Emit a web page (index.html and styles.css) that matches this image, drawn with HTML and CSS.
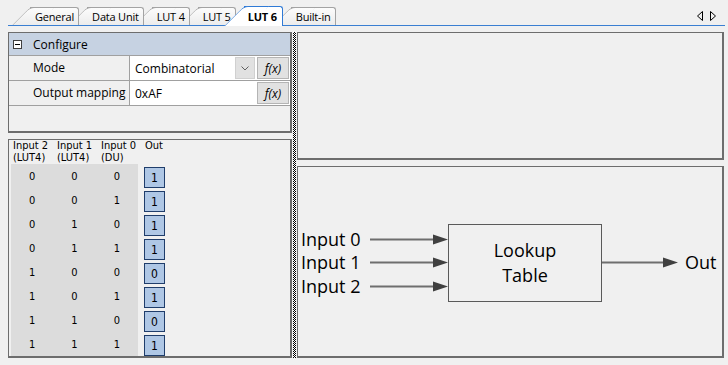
FILE: index.html
```html
<!DOCTYPE html>
<html lang="en">
<head>
    <meta charset="UTF-8">
    <title>LUT 6 - Configure</title>
    <link rel="stylesheet" href="styles.css">
</head>
<body>

<!-- Tab strip -->
<div class="tabbar">
    <div class="tabs">
        <div class="tab">General</div>
        <div class="tab">Data Unit</div>
        <div class="tab">LUT 4</div>
        <div class="tab">LUT 5</div>
        <div class="tab active">LUT 6</div>
        <div class="tab">Built-in</div>
    </div>
    <div class="tab-scroll">
        <svg width="6" height="10" viewBox="0 0 6 10"><polygon points="5.5,0.5 5.5,9.5 0.5,5" fill="none" stroke="#000"/></svg>
        <svg width="6" height="10" viewBox="0 0 6 10"><polygon points="0.5,0.5 0.5,9.5 5.5,5" fill="none" stroke="#000"/></svg>
    </div>
</div>

<div class="workspace">
    <div class="left-col">
        <!-- Property grid -->
        <div class="prop-grid">
            <div class="pg-header"><span class="collapse-box"></span>Configure</div>
            <div class="pg-row">
                <div class="pg-label">Mode</div>
                <div class="pg-value">Combinatorial</div>
                <button class="dd-btn"><svg width="8" height="5" viewBox="0 0 8 5"><polyline points="0.5,0.5 4,4 7.5,0.5" fill="none" stroke="#606060"/></svg></button>
                <button class="fx-btn">f(x)</button>
            </div>
            <div class="pg-row">
                <div class="pg-label">Output mapping</div>
                <div class="pg-value">0xAF</div>
                <button class="fx-btn">f(x)</button>
            </div>
        </div>

        <!-- Truth table -->
        <div class="truth-table">
            <div class="tt-head">
                <div>Input 2<br>(LUT4)</div>
                <div>Input 1<br>(LUT4)</div>
                <div>Input 0<br>(DU)</div>
                <div>Out</div>
            </div>
            <div class="tt-body">
                <div class="tt-values">
                    <span>0</span><span>0</span><span>0</span>
                    <span>0</span><span>0</span><span>1</span>
                    <span>0</span><span>1</span><span>0</span>
                    <span>0</span><span>1</span><span>1</span>
                    <span>1</span><span>0</span><span>0</span>
                    <span>1</span><span>0</span><span>1</span>
                    <span>1</span><span>1</span><span>0</span>
                    <span>1</span><span>1</span><span>1</span>
                </div>
                <div class="tt-out">
                    <button class="out-btn">1</button>
                    <button class="out-btn">1</button>
                    <button class="out-btn">1</button>
                    <button class="out-btn">1</button>
                    <button class="out-btn">0</button>
                    <button class="out-btn">1</button>
                    <button class="out-btn">0</button>
                    <button class="out-btn">1</button>
                </div>
            </div>
        </div>
    </div>

    <div class="splitter"></div>

    <div class="right-col">
        <div class="panel panel-top"></div>
        <div class="panel panel-diagram">
            <svg class="diagram" width="425" height="189" viewBox="0 0 425 189">
                <g class="wire">
                    <line x1="72" y1="72.5" x2="137" y2="72.5"/>
                    <line x1="72" y1="95.5" x2="137" y2="95.5"/>
                    <line x1="72" y1="119.5" x2="137" y2="119.5"/>
                    <line x1="304" y1="95.5" x2="367" y2="95.5"/>
                </g>
                <g class="head">
                    <polygon points="135,67.5 150,72.5 135,77.5"/>
                    <polygon points="135,90.5 150,95.5 135,100.5"/>
                    <polygon points="135,114.5 150,119.5 135,124.5"/>
                    <polygon points="365,90.5 380,95.5 365,100.5"/>
                </g>
                <rect class="lut-box" x="150.5" y="57.5" width="153" height="77"/>
                <text x="3" y="79">Input 0</text>
                <text x="3" y="102">Input 1</text>
                <text x="3" y="126">Input 2</text>
                <text x="227" y="90" text-anchor="middle">Lookup</text>
                <text x="227" y="115" text-anchor="middle">Table</text>
                <text x="387" y="102">Out</text>
            </svg>
        </div>
    </div>
</div>

</body>
</html>
```

FILE: styles.css
```css
/* Page */
body {
    margin: 0;
    width: 728px;
    height: 365px;
    overflow: hidden;
    background: #f0f0f0;
    font-family: 'Open Sans', 'Noto Sans', sans-serif;
    font-size: 12px;
    color: #000;
}

/* Tab strip */
.tabbar {
    display: flex;
    align-items: flex-end;
    height: 25px;
    margin: 0 3px 0 8px;
    border-bottom: 1px solid #3a7fd2;
}

.tabs {
    display: flex;
    align-items: flex-end;
    height: 100%;
    padding-left: 14px;
}

.tab {
    position: relative;
    height: 17px;
    line-height: 17px;
    margin-left: 8px;
    padding: 0 4px;
    border: 1px solid #a3a3a3;
    border-bottom: none;
    border-top-right-radius: 3px;
    background: linear-gradient(#fcfcfc, #ececec);
    font-size: 11px;
    letter-spacing: -0.2px;
}

/* slanted left edge */
.tab::before {
    content: '';
    position: absolute;
    left: -19px;
    top: -1px;
    bottom: 0;
    width: 24px;
    border-left: 1px solid #a3a3a3;
    border-top: 1px solid #a3a3a3;
    border-top-left-radius: 5px;
    background: inherit;
    transform: skewX(-45deg);
    transform-origin: bottom left;
    z-index: -1;
}

.tab:nth-child(1) { z-index: 6; }
.tab:nth-child(2) { z-index: 5; }
.tab:nth-child(3) { z-index: 4; }
.tab:nth-child(4) { z-index: 3; }
.tab:nth-child(6) { z-index: 1; }

.tab.active {
    z-index: 10;
    height: 19px;
    line-height: 19px;
    margin-bottom: -1px;
    border-color: #2f7ad6;
    background: #fff;
    font-weight: bold;
    padding: 0 5px 0 3px;
}

.tab.active::before {
    left: -21px;
    border-color: #2f7ad6;
    background: #fff;
}

.tab-scroll {
    display: flex;
    gap: 7px;
    margin-left: auto;
    align-self: flex-start;
    margin-top: 11px;
    padding-right: 9px;
}

.tab-scroll svg {
    display: block;
}

/* Main area */
.workspace {
    display: flex;
    height: 326px;
    margin: 6px 0 0 8px;
}

.left-col {
    display: flex;
    flex-direction: column;
    gap: 6px;
    width: 284px;
}

.splitter {
    width: 3px;
    margin: 0 1px;
    background: repeating-conic-gradient(#000 0 25%, #fff 0 50%) 0 0 / 2px 2px;
}

.right-col {
    display: flex;
    flex-direction: column;
    gap: 6px;
    width: 427px;
}

.panel, .prop-grid, .truth-table {
    box-sizing: border-box;
    border: 1px solid #6d6d6d;
    border-right-width: 2px;
    border-bottom-width: 2px;
}

.panel-top {
    height: 128px;
}

.panel-diagram {
    flex: 1;
}

/* Property grid */
.prop-grid {
    height: 102px;
}

.pg-header {
    display: flex;
    align-items: center;
    height: 22px;
    background: #c6d2e2;
    border-bottom: 1px solid #a0a0a0;
}

.collapse-box {
    position: relative;
    width: 7px;
    height: 7px;
    margin: 0 11px 0 4px;
    border: 1px solid #404040;
    background: #fff;
}

.collapse-box::after {
    content: '';
    position: absolute;
    left: 1px;
    top: 3px;
    width: 5px;
    height: 1px;
    background: #000;
}

.pg-row {
    display: flex;
    align-items: center;
    height: 24px;
    border-bottom: 1px solid #a0a0a0;
    background: #fff;
}

.pg-label {
    width: 96px;
    height: 100%;
    line-height: 24px;
    padding-left: 24px;
    background: #f0f0f0;
    border-right: 1px solid #a0a0a0;
}

.pg-value {
    flex: 1;
    padding-left: 5px;
}

.dd-btn, .fx-btn {
    height: 22px;
    padding: 0;
    border: 1px solid #b4b4b4;
    background: #e1e1e1;
    font-family: inherit;
    color: #000;
}

.dd-btn {
    width: 20px;
    margin-right: 2px;
    border-color: #d0d0d0;
}

.dd-btn svg {
    display: block;
    margin: 0 auto;
}

.fx-btn {
    width: 32px;
    margin-right: 1px;
    font-size: 12px;
    font-style: italic;
}

/* Truth table */
.truth-table {
    flex: 1;
    padding: 0 0 0 2px;
    font-family: 'DejaVu Sans Condensed', 'Liberation Sans Narrow', sans-serif;
    font-size: 11px;
}

.tt-head {
    display: grid;
    grid-template-columns: 44px 44px 44px 40px;
    height: 24px;
    padding-left: 2px;
    line-height: 12px;
    font-size: 11px;
}

.tt-body {
    display: flex;
}

.tt-values {
    display: grid;
    grid-template-columns: repeat(3, 1fr);
    grid-auto-rows: 24px;
    width: 127px;
    align-items: center;
    text-align: center;
    background: #dcdcdc;
}

.tt-out {
    display: flex;
    flex-direction: column;
    gap: 3px;
    padding-top: 3px;
    margin-left: 6px;
}

.out-btn {
    width: 21px;
    height: 21px;
    padding: 0;
    border: 1px solid #1f3d6b;
    background: #afc7e5;
    font-family: inherit;
    font-size: 12px;
    color: #000;
}

/* Diagram */
.diagram {
    display: block;
    font-family: 'Open Sans', 'Noto Sans', sans-serif;
    font-size: 18px;
}

.diagram .wire line {
    stroke: #6e6e6e;
    stroke-width: 2;
}

.diagram .head polygon {
    fill: #404040;
}

.diagram .lut-box {
    fill: none;
    stroke: #5a5a5a;
}
```
